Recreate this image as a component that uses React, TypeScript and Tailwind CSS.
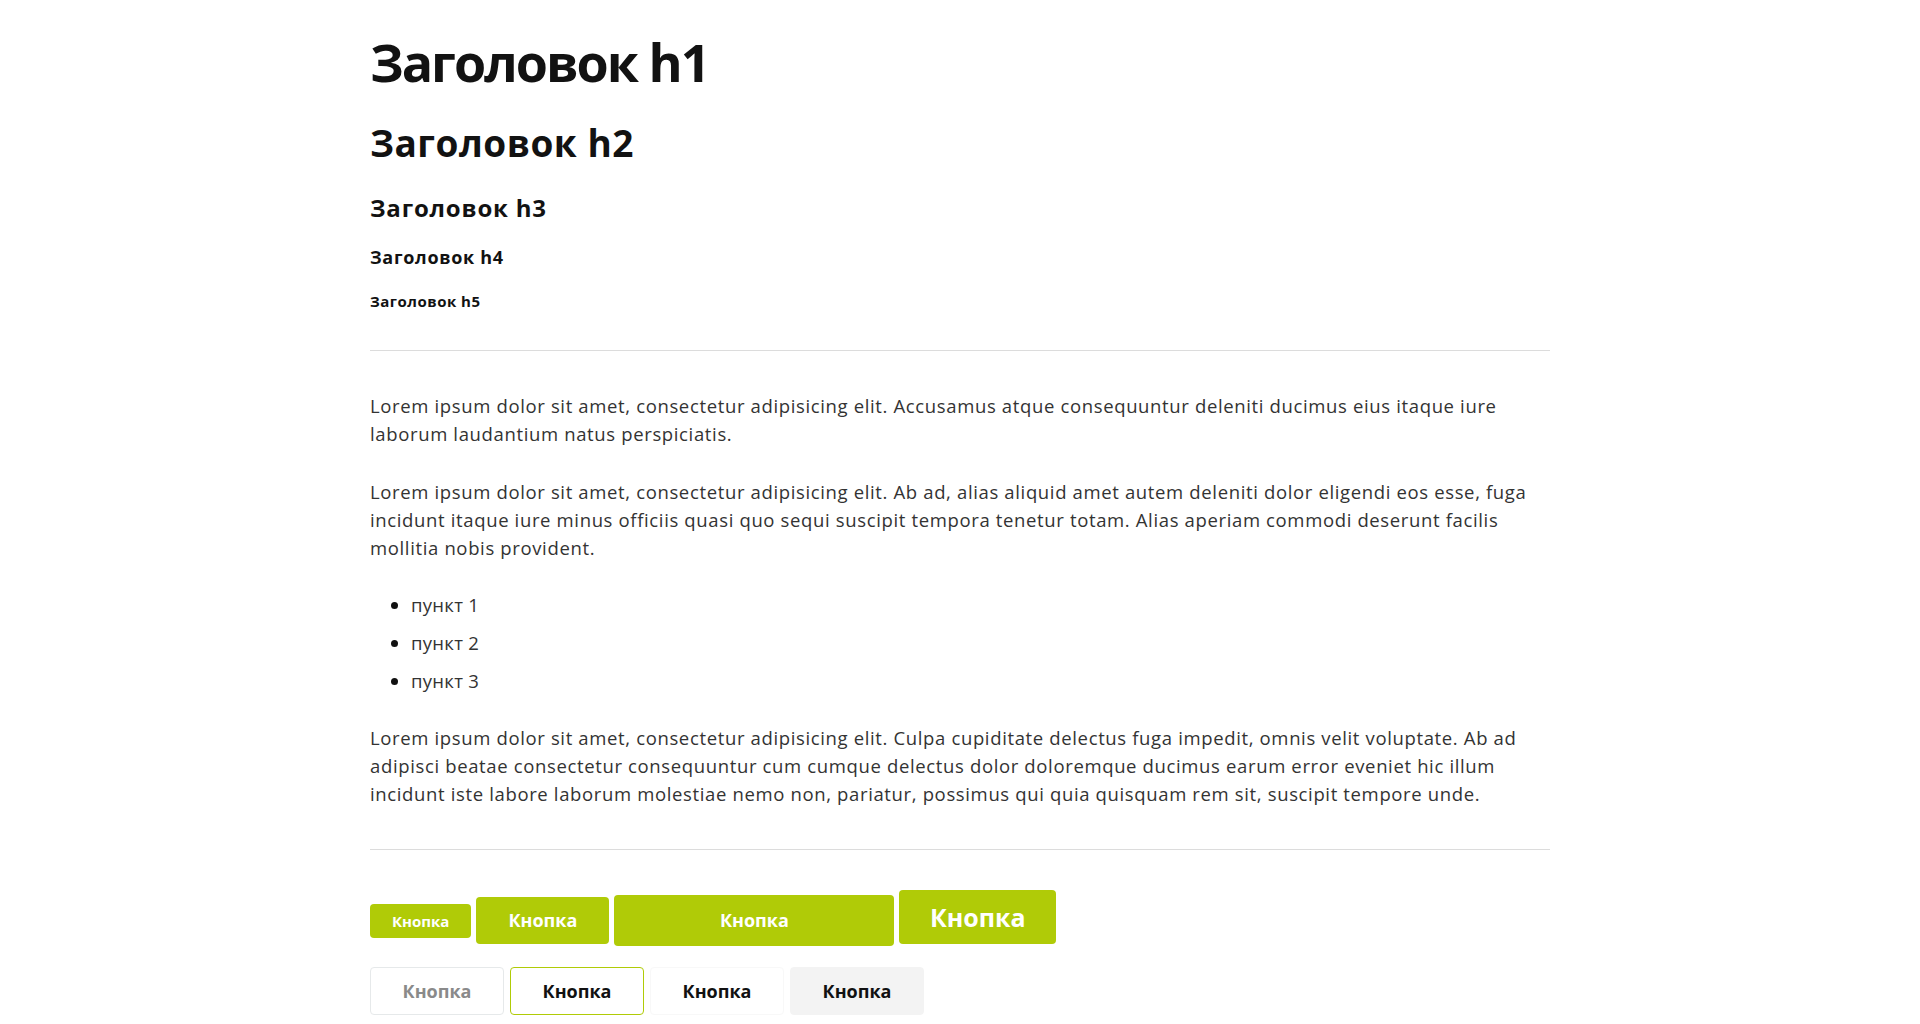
export default function App() {
  return (
    <div className="min-h-screen bg-white font-['Open_Sans',sans-serif] text-[#121212]">
      <div className="mx-auto w-[1180px] pt-8">
        <h1 className="text-[52px] leading-[60px] font-bold tracking-[-2px]">Заголовок h1</h1>
        <h2 className="mt-[28px] text-[37px] leading-[46px] font-bold tracking-[0.5px]">Заголовок h2</h2>
        <h3 className="mt-[26px] text-[24px] leading-[32px] font-bold tracking-[0.8px]">Заголовок h3</h3>
        <h4 className="mt-[21px] text-[18px] leading-[24px] font-bold tracking-[0.7px]">Заголовок h4</h4>
        <h5 className="mt-[22px] text-[15px] leading-[20px] font-bold tracking-[0.5px]">Заголовок h5</h5>

        <hr className="mt-[39px] border-0 border-t border-[#dcdcdc]" />

        <div className="text-[18.5px] leading-[28px] tracking-[0.64px] text-[#333] whitespace-nowrap">
          <p className="mt-[41px]">
            Lorem ipsum dolor sit amet, consectetur adipisicing elit. Accusamus atque consequuntur deleniti ducimus eius itaque iure
            <br />
            laborum laudantium natus perspiciatis.
          </p>
          <p className="mt-[30px]">
            Lorem ipsum dolor sit amet, consectetur adipisicing elit. Ab ad, alias aliquid amet autem deleniti dolor eligendi eos esse, fuga
            <br />
            incidunt itaque iure minus officiis quasi quo sequi suscipit tempora tenetur totam. Alias aperiam commodi deserunt facilis
            <br />
            mollitia nobis provident.
          </p>
          <ul className="mt-[29px] list-disc pl-[41px] tracking-[0.3px] marker:text-[#111]">
            <li>пункт 1</li>
            <li className="mt-[10px]">пункт 2</li>
            <li className="mt-[10px]">пункт 3</li>
          </ul>
          <p className="mt-[29px]">
            Lorem ipsum dolor sit amet, consectetur adipisicing elit. Culpa cupiditate delectus fuga impedit, omnis velit voluptate. Ab ad
            <br />
            adipisci beatae consectetur consequuntur cum cumque delectus dolor doloremque ducimus earum error eveniet hic illum
            <br />
            incidunt iste labore laborum molestiae nemo non, pariatur, possimus qui quia quisquam rem sit, suscipit tempore unde.
          </p>
        </div>

        <hr className="mt-[41px] border-0 border-t border-[#dcdcdc]" />

        <div className="mt-[40px] flex items-baseline gap-[5px]">
          <button className="rounded-[4px] bg-[#b0cb07] px-[22px] py-[7px] text-[15px] leading-[20px] font-bold text-white">
            Кнопка
          </button>
          <button className="rounded-[4px] bg-[#b0cb07] px-[32px] py-[11px] text-[18px] leading-[25px] font-bold text-white">
            Кнопка
          </button>
          <button className="w-[280px] rounded-[4px] bg-[#b0cb07] py-[13px] text-[18px] leading-[25px] font-bold text-white">
            Кнопка
          </button>
          <button className="w-[157px] rounded-[4px] bg-[#b0cb07] py-[11px] text-[25px] leading-[32px] font-bold text-white">
            Кнопка
          </button>
        </div>

        <div className="mt-[21px] flex gap-[6px]">
          <button className="w-[134px] rounded-[4px] border border-[#e6e9ea] py-[11px] text-[18px] leading-[24px] font-bold text-[#8a8a8a]">
            Кнопка
          </button>
          <button className="w-[134px] rounded-[4px] border border-[#b0cb07] py-[11px] text-[18px] leading-[24px] font-bold text-[#111]">
            Кнопка
          </button>
          <button className="w-[134px] rounded-[4px] border border-[#f8f8f8] py-[11px] text-[18px] leading-[24px] font-bold text-[#111]">
            Кнопка
          </button>
          <button className="w-[134px] rounded-[4px] border border-[#f3f3f3] bg-[#f3f3f3] py-[11px] text-[18px] leading-[24px] font-bold text-[#111]">
            Кнопка
          </button>
        </div>
      </div>
    </div>
  );
}
